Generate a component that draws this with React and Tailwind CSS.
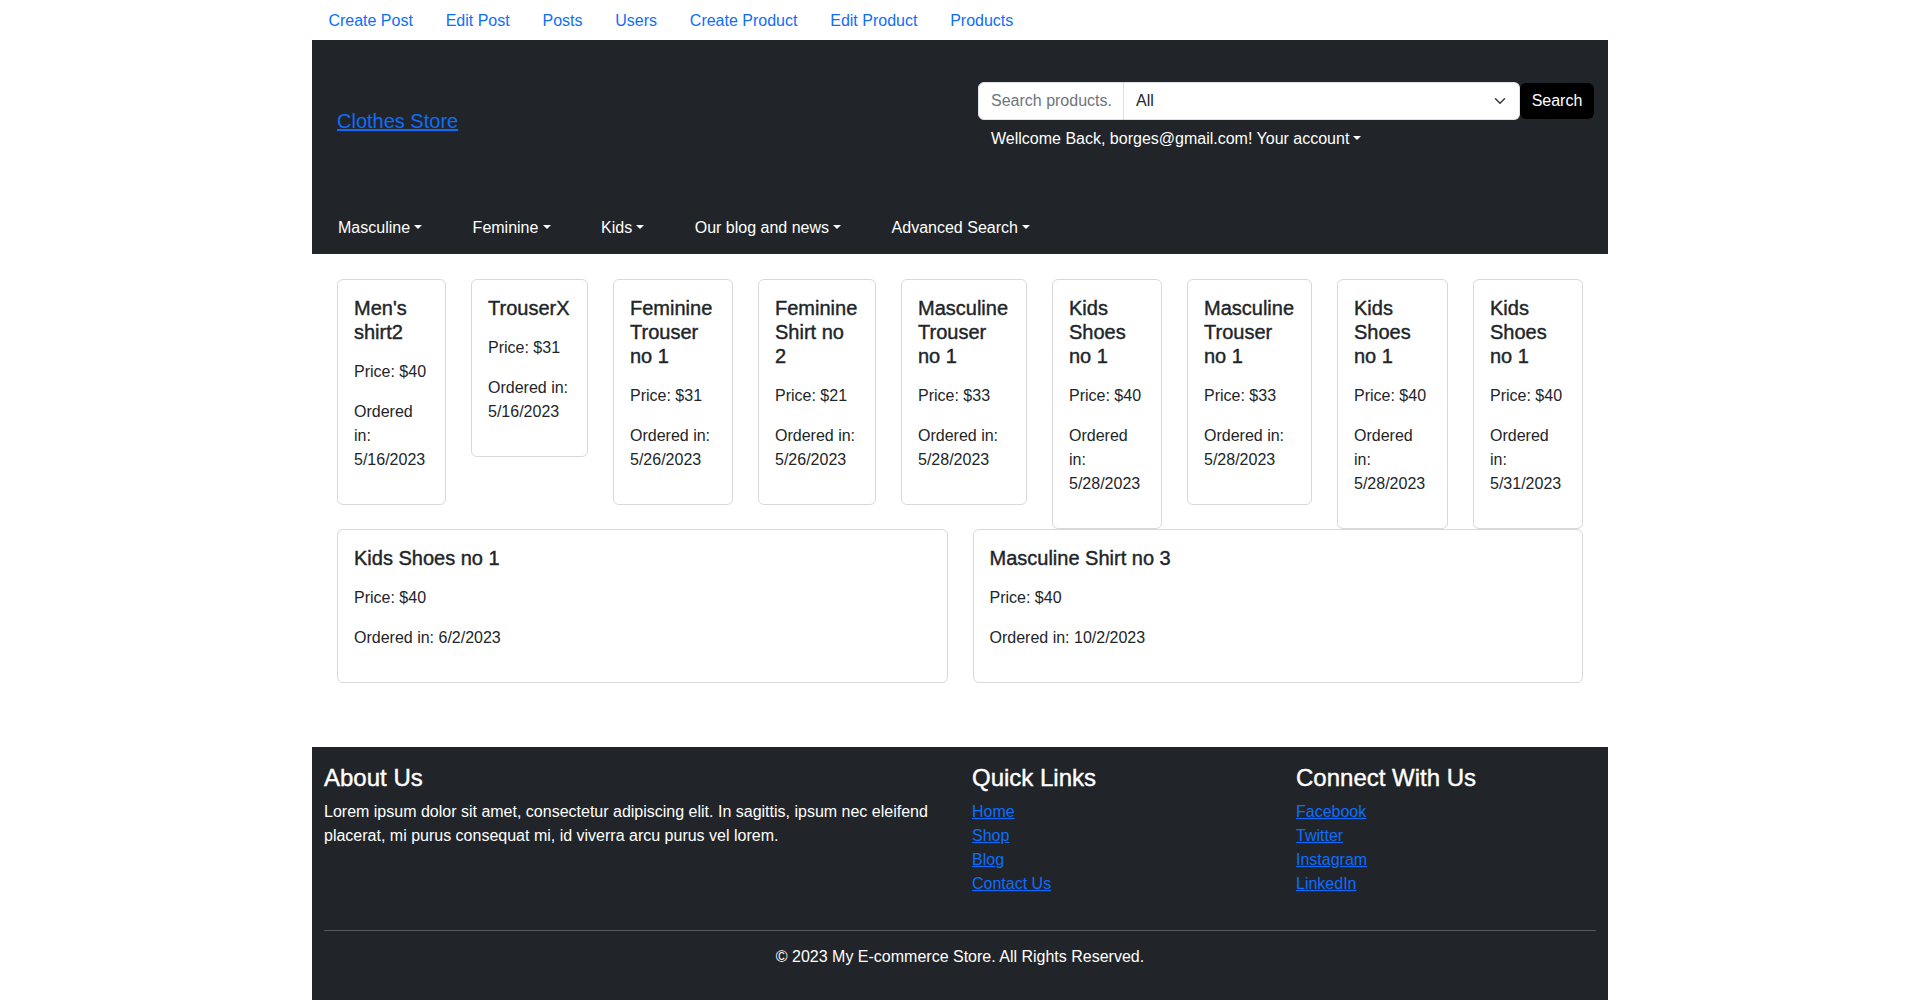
import React from 'react';

const topLinks = ['Create Post', 'Edit Post', 'Posts', 'Users', 'Create Product', 'Edit Product', 'Products'];
const categories = ['Masculine', 'Feminine', 'Kids', 'Our blog and news', 'Advanced Search'];

const orders = [
  { name: "Men's shirt2", price: 40, date: '5/16/2023', w: 'w-[109px]' },
  { name: 'TrouserX', price: 31, date: '5/16/2023', w: 'w-[117px]' },
  { name: 'Feminine Trouser no 1', price: 31, date: '5/26/2023', w: 'w-[120px]' },
  { name: 'Feminine Shirt no 2', price: 21, date: '5/26/2023', w: 'w-[118px]' },
  { name: 'Masculine Trouser no 1', price: 33, date: '5/28/2023', w: 'w-[126px]' },
  { name: 'Kids Shoes no 1', price: 40, date: '5/28/2023', w: 'w-[110px]' },
  { name: 'Masculine Trouser no 1', price: 33, date: '5/28/2023', w: 'w-[125px]' },
  { name: 'Kids Shoes no 1', price: 40, date: '5/28/2023', w: 'w-[111px]' },
  { name: 'Kids Shoes no 1', price: 40, date: '5/31/2023', w: 'w-[110px]' },
];

const wideOrders = [
  { name: 'Kids Shoes no 1', price: 40, date: '6/2/2023' },
  { name: 'Masculine Shirt no 3', price: 40, date: '10/2/2023' },
];

const Caret = () => (
  <span className="ml-[0.255em] inline-block align-[0.255em] border-x-[0.3em] border-t-[0.3em] border-b-0 border-x-transparent border-t-current" />
);

const OrderCard = ({ order, className }) => (
  <div className={`shrink-0 rounded-md border border-[#d9d9da] bg-white p-4 ${className}`}>
    <h5 className="mb-4 text-[20px] font-medium leading-6 [-webkit-text-stroke:0.4px_#212529]">{order.name}</h5>
    <p className="mb-4">Price: ${order.price}</p>
    <p className="mb-4">Ordered in: {order.date}</p>
  </div>
);

const App = () => {
  return (
    <div className="min-h-screen bg-white text-base leading-6 text-[#212529] font-['Liberation_Sans',Arial,sans-serif]">
      <div className="mx-auto w-[1320px] px-3">
        {/* Admin links */}
        <nav className="flex h-10 items-center pt-px">
          {topLinks.map((link) => (
            <a key={link} href="#" className="px-[16.4px] text-[#0d6efd]">
              {link}
            </a>
          ))}
        </nav>

        {/* Store header */}
        <header className="bg-[#212529] pt-[42px] pb-[14px] text-white">
          <div className="flex items-start justify-between pl-[25px] pr-[14px]">
            <a href="#" className="mt-[24px] text-[20px] leading-[30px] text-[#0d6efd] underline">
              Clothes Store
            </a>
            <div className="flex flex-col items-start">
              <form className="flex items-center">
                <input
                  type="text"
                  placeholder="Search products..."
                  className="h-[38px] w-[146px] rounded-l-md border border-[#dee2e6] bg-white px-3 text-[#212529] outline-none placeholder:text-[#6c757d]"
                />
                <div className="relative">
                  <select className="h-[38px] w-[396px] appearance-none rounded-r-md border border-l-0 border-[#dee2e6] bg-white pl-3 text-[#212529] outline-none">
                    <option>All</option>
                  </select>
                  <svg
                    className="pointer-events-none absolute right-3 top-1/2 -translate-y-1/2"
                    width="16"
                    height="12"
                    viewBox="0 0 16 16"
                    fill="none"
                    stroke="#343a40"
                    strokeWidth="2"
                    strokeLinecap="round"
                    strokeLinejoin="round"
                  >
                    <path d="m2 5 6 6 6-6" />
                  </svg>
                </div>
                <button type="button" className="h-[36px] w-[74px] rounded-md bg-black text-white">
                  Search
                </button>
              </form>
              <button type="button" className="mt-[7px] ml-[13px] leading-6 text-white">
                Wellcome Back, borges@gmail.com! Your account
                <Caret />
              </button>
            </div>
          </div>

          <ul className="mt-[65px] flex gap-[50.5px] pl-[26px]">
            {categories.map((cat) => (
              <li key={cat} className="leading-6 text-white">
                {cat}
                <Caret />
              </li>
            ))}
          </ul>
        </header>

        {/* Orders */}
        <main className="px-[25px] pt-[25px] pb-[64px]">
          <div className="flex items-start gap-[25px]">
            {orders.map((order, i) => (
              <OrderCard key={i} order={order} className={order.w} />
            ))}
          </div>
          <div className="grid grid-cols-2 gap-[25px]">
            {wideOrders.map((order, i) => (
              <OrderCard key={i} order={order} />
            ))}
          </div>
        </main>

        {/* Footer */}
        <footer className="bg-[#212529] px-3 pt-4 pb-[33px] text-white">
          <div className="grid grid-cols-[624px_1fr_1fr] gap-x-6">
            <div>
              <h4 className="mb-2 text-[24px] font-medium leading-[29px] [-webkit-text-stroke:0.4px_white]">About Us</h4>
              <p>
                Lorem ipsum dolor sit amet, consectetur adipiscing elit. In sagittis, ipsum nec eleifend placerat, mi
                purus consequat mi, id viverra arcu purus vel lorem.
              </p>
            </div>
            <div>
              <h4 className="mb-2 text-[24px] font-medium leading-[29px] [-webkit-text-stroke:0.4px_white]">Quick Links</h4>
              <ul>
                {['Home', 'Shop', 'Blog', 'Contact Us'].map((l) => (
                  <li key={l}>
                    <a href="#" className="text-[#0d6efd] underline">
                      {l}
                    </a>
                  </li>
                ))}
              </ul>
            </div>
            <div>
              <h4 className="mb-2 text-[24px] font-medium leading-[29px] [-webkit-text-stroke:0.4px_white]">Connect With Us</h4>
              <ul>
                {['Facebook', 'Twitter', 'Instagram', 'LinkedIn'].map((l) => (
                  <li key={l}>
                    <a href="#" className="text-[#0d6efd] underline">
                      {l}
                    </a>
                  </li>
                ))}
              </ul>
            </div>
          </div>
          <hr className="mt-[34px] border-t border-white/25" />
          <p className="mt-[14px] text-center">© 2023 My E-commerce Store. All Rights Reserved.</p>
        </footer>
      </div>
    </div>
  );
};

export default App;
